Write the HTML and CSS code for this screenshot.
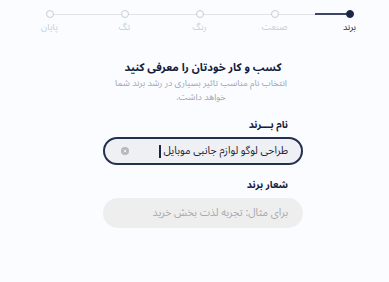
FILE: index.html
```html
<!DOCTYPE html>
<html lang="fa" dir="rtl">
<head>
<meta charset="utf-8">
<link rel="stylesheet" href="styles.css">
</head>
<body>
<div class="stepper">
  <div class="step active"><span class="dot"></span><span class="step-label">برند</span></div>
  <div class="step"><span class="dot"></span><span class="step-label">صنعت</span></div>
  <div class="step"><span class="dot"></span><span class="step-label">رنگ</span></div>
  <div class="step"><span class="dot"></span><span class="step-label">تگ</span></div>
  <div class="step last"><span class="dot"></span><span class="step-label">پایان</span></div>
</div>
<main class="content">
  <h1 class="title">کسب و کار خودتان را معرفی کنید</h1>
  <p class="subtitle">انتخاب نام مناسب تاثیر بسیاری در رشد برند شما خواهد داشت.</p>
  <label class="field-label">نام بـــرند</label>
  <div class="input focused">
    <span class="value">طراحی لوگو لوازم جانبی موبایل</span><span class="caret"></span>
    <span class="clear"><svg width="8" height="8" viewBox="0 0 8 8"><circle cx="4" cy="4" r="4" fill="#b5b7bb"/><path d="M2.6 2.6 L5.4 5.4 M5.4 2.6 L2.6 5.4" stroke="#eceef1" stroke-width="1"/></svg></span>
  </div>
  <label class="field-label second">شعار برند</label>
  <div class="input plain">
    <span class="placeholder">برای مثال: تجربه لذت بخش خرید</span>
  </div>
</main>
</body>
</html>
```
FILE: styles.css
```css
* { box-sizing: border-box; }
html, body { margin: 0; padding: 0; }
body {
  background: #fafcff;
  font-family: "Noto Sans Arabic", "Noto Sans", "DejaVu Sans", sans-serif;
  direction: rtl;
  width: 389px;
  height: 282px;
  overflow: hidden;
}
.stepper {
  display: flex;
  padding: 10px 2px 0 12px;
}
.step {
  width: 75px;
  display: flex;
  flex-direction: column;
  align-items: center;
  position: relative;
}
.step::before {
  content: "";
  position: absolute;
  top: 3.5px;
  right: 37.5px;
  width: 75px;
  height: 1px;
  background: #e1e3e7;
}
.step.active::after {
  content: "";
  position: absolute;
  top: 3px;
  right: 37.5px;
  width: 35px;
  height: 2px;
  background: #3c4763;
}
.step.last::before { display: none; }
.dot {
  position: relative;
  z-index: 1;
  width: 8px;
  height: 8px;
  border-radius: 50%;
  border: 1px solid #c9cdd3;
  background: #fafcff;
}
.step.active .dot {
  background: #1b2544;
  border-color: #1b2544;
}
.step-label {
  margin-top: 4px;
  font-size: 9px;
  line-height: 12px;
  color: #c8ccd2;
}
.step.active .step-label { color: #1b2544; }
.content {
  width: 200px;
  margin: 25px 86px 0 0;
  display: flex;
  flex-direction: column;
}
.title {
  margin: 0;
  font-size: 11px;
  line-height: 18px;
  font-weight: bold;
  color: #141c3a;
  text-align: center;
}
.subtitle {
  margin: 0 10px 0 6px;
  font-size: 9px;
  line-height: 14px;
  color: #a3a6ad;
  text-align: center;
}
.field-label {
  margin: 13px 15px 0 0;
  font-size: 10px;
  line-height: 14px;
  font-weight: bold;
  color: #141c3a;
}
.field-label.second { margin-top: 13px; }
.input {
  margin-top: 5px;
  height: 30px;
  border-radius: 15px;
  background: #eeeeef;
  display: flex;
  align-items: center;
  padding: 0 15px;
  font-size: 10.5px;
}
.input.plain { margin-top: 6px; }
.input.focused {
  height: 28px;
  border: 2px solid #24304f;
  background: #eef0f3;
  padding: 0 13px;
}
.value { color: #1d2233; }
.caret {
  width: 2px;
  height: 13px;
  background: #1b2544;
  margin-right: 2px;
}
.clear {
  margin-right: auto;
  display: flex;
  margin-left: 3px;
}
.placeholder { color: #a7a9ad; }
```
